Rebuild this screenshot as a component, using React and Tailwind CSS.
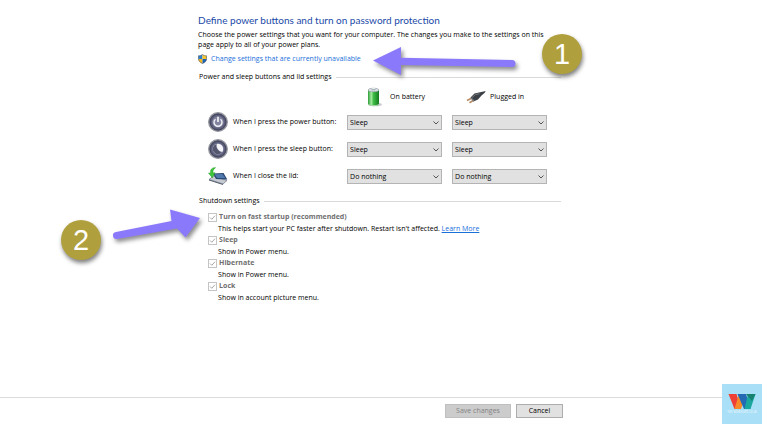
import React, { useState } from 'react';

const options = ['Do nothing', 'Sleep', 'Hibernate', 'Shut down'];

// Icons

const ShieldIcon = () => (
  <svg viewBox="0 0 18 20" className="h-[10px] w-[9px] shrink-0">
    <path d="M9 1C6.500 3 4 3.500 1 3.500V10H9Z" fill="#2d7fd0" />
    <path d="M9 1C11.500 3 14 3.500 17 3.500V10H9Z" fill="#f8c52c" />
    <path d="M1 10H9V19C4 17 1 14 1 10Z" fill="#f5b81f" />
    <path d="M17 10H9V19C14 17 17 14 17 10Z" fill="#1c62b5" />
    <path d="M9 1C6.500 3 4 3.500 1 3.500V10C1 14 4 17 9 19C14 17 17 14 17 10V3.500C14 3.500 11.500 3 9 1Z" fill="none" stroke="#4a5666" strokeWidth="1.200" />
  </svg>
);

const BatteryIcon = () => (
  <svg viewBox="0 0 16 22" className="h-[22px] w-4 shrink-0">
    <defs>
      <linearGradient id="cell" x1="0" x2="1">
        <stop offset="0" stopColor="#2c9d36" />
        <stop offset="0.3" stopColor="#a5eba0" />
        <stop offset="0.5" stopColor="#3fbd44" />
        <stop offset="1" stopColor="#157a20" />
      </linearGradient>
    </defs>
    <ellipse cx="10" cy="18.500" rx="6" ry="1.800" fill="#c9cdd0" />
    <path d="M2 4V18C2 20.200 13 20.200 13 18V4Z" fill="url(#cell)" />
    <ellipse cx="7.500" cy="4" rx="5.500" ry="1.800" fill="#d8dfe3" stroke="#8d979d" strokeWidth="0.600" />
    <path d="M5.500 2V3.800C5.500 4.500 9.500 4.500 9.500 3.800V2Z" fill="#a7b2b8" />
    <ellipse cx="7.500" cy="2" rx="2" ry="0.900" fill="#eef2f4" />
    <path d="M2 17.500C2 19.600 13 19.600 13 17.500V18.500C13 20.700 2 20.700 2 18.500Z" fill="#a5cfa6" />
  </svg>
);

const PlugIcon = () => (
  <svg viewBox="0 0 20 14" className="h-[14px] w-5 shrink-0">
    <path d="M1 10.500L6 8M3.500 12.800L8 10" stroke="#b78d69" strokeWidth="1.800" />
    <path d="M4.500 7.500L8.500 3.500L13 2.500L19.700 1L18.500 3L15.500 5.500L12 9.500L7.500 11.500Z" fill="#3c4047" />
    <path d="M6 7.500L9.500 4.500L13.500 3.800" stroke="#7b8087" strokeWidth="0.900" fill="none" />
    <path d="M5 7.800L8 11" stroke="#777b83" strokeWidth="1.200" />
  </svg>
);

const RoundIcon = ({ children }) => (
  <svg viewBox="0 0 20 20" className="size-5">
    <circle cx="10" cy="10" r="9.300" fill="#474961" stroke="#96979f" strokeWidth="1.300" />
    <circle cx="10" cy="10" r="7.300" fill="#5d5f7c" />
    <circle cx="10" cy="10" r="5.800" fill="#8385a0" />
    {children}
  </svg>
);

const PowerIcon = () => (
  <RoundIcon>
    <path d="M7.500 7.200A4 4 0 1 0 12.500 7.200" fill="none" stroke="#f1f1f7" strokeWidth="1.400" />
    <path d="M10 4.800V10" stroke="#fff" strokeWidth="1.500" />
  </RoundIcon>
);

const SleepIcon = () => (
  <RoundIcon>
    <circle cx="10" cy="10" r="5.200" fill="#d9dae6" />
    <path d="M8.500 5A5.200 5.200 0 1 0 14.200 13A6.800 6.800 0 0 1 8.500 5Z" fill="#55576f" />
    <path d="M9 5A5.200 5.200 0 0 1 14.300 12.800A6.800 6.800 0 0 1 9 5Z" fill="#f4f4f9" />
  </RoundIcon>
);

const LidIcon = () => (
  <svg viewBox="0 0 20 18" className="h-[18px] w-5">
    <path d="M1 12.500L5.500 9L19 13.500L15 17Z" fill="#c5cad2" stroke="#6a7280" strokeWidth="0.700" />
    <path d="M1 12.500L15 17V18L1 13.500Z" fill="#565f6e" />
    <path d="M5 6.500L15.500 6L19.300 12.500L8 12Z" fill="#27446d" />
    <path d="M6.500 7.300L14.500 7L17.500 11.300L9 11Z" fill="#5079ad" />
    <path d="M7.500 0.700C3.500 0.500 2 3 2.700 6.300L0.500 6L4.300 10.700L7 5.700L5 6C4.700 3.500 5.300 2.300 7.500 0.700Z" fill="#3fc83a" stroke="#1c9421" strokeWidth="0.500" />
  </svg>
);

const SiteLogo = () => (
  <svg viewBox="0 0 40 40" className="absolute right-0 bottom-0 size-10">
    <rect width="40" height="40" fill="#a9dff7" />
    <path d="M6.500 10H14.500L19 25H12.500Z" fill="#ee4035" />
    <path d="M12.500 25L17 10H24L19 25Z" fill="#f68b28" />
    <path d="M15.500 10H24L28.500 25H22Z" fill="#2469b3" />
    <path d="M22.500 25L26 10H33.500L28.500 25Z" fill="#1aa7a0" />
    <path d="M24 10H33.500L30 17Z" fill="#16826f" />
    <text x="20" y="29" textAnchor="middle" fontSize="3" fill="#fff" opacity="0.800">THE WINDOWS CLUB</text>
  </svg>
);

const SectionTitle = ({ children }) => (
  <div className="flex h-[10px] items-center gap-1">
    <h2 className="pl-px">{children}</h2>
    <div className="h-px flex-1 bg-[#d9d9d9]" />
  </div>
);

const Dropdown = ({ label, value, onChange }) => (
  <div className="relative w-[95px]">
    <select
      aria-label={label}
      value={value}
      onChange={(e) => onChange(e.target.value)}
      className="block h-[15px] w-full appearance-none border border-[#b4b4b4] bg-[#e1e1e1] pl-0.5 leading-[13px] text-black"
    >
      {options.map((o) => <option key={o}>{o}</option>)}
    </select>
    <svg viewBox="0 0 6 4" className="pointer-events-none absolute top-[6px] right-[3px] h-1 w-1.5">
      <path d="M0.500 0.500L3 3L5.500 0.500" fill="none" stroke="#444" strokeWidth="0.900" />
    </svg>
  </div>
);

const ButtonRow = ({ icon, label, initial }) => {
  const [battery, setBattery] = useState(initial);
  const [plugged, setPlugged] = useState(initial);

  return (
    <div className="flex items-center">
      <div className="flex h-5 w-[25px] items-center">{icon}</div>
      <span className="w-[114px] whitespace-nowrap">{label}</span>
      <div className="flex gap-[10px]">
        <Dropdown label={`${label} On battery`} value={battery} onChange={setBattery} />
        <Dropdown label={`${label} Plugged in`} value={plugged} onChange={setPlugged} />
      </div>
    </div>
  );
};

const Setting = ({ id, title, children }) => (
  <div>
    <div className="flex h-3 items-center gap-0.5">
      <span className="relative size-[9px]">
        <input id={id} type="checkbox" defaultChecked disabled className="block size-[9px] appearance-none border border-[#c4c4c4] bg-white" />
        <svg viewBox="0 0 9 9" className="pointer-events-none absolute inset-0 size-[9px]">
          <path d="M2 4.500L3.800 6.300L7 2.700" fill="none" stroke="#a8a8a8" strokeWidth="1" />
        </svg>
      </span>
      <label htmlFor={id} className="font-bold text-[#6f6f6f]">{title}</label>
    </div>
    <p className="h-[11px] pl-[10px] leading-[11px]">{children}</p>
  </div>
);

const Annotations = () => (
  <div className="pointer-events-none absolute inset-0">
    <svg viewBox="0 0 762 424" className="absolute top-0 left-0 h-[424px] w-[762px]">
      <g fill="#8b79fb" className="drop-shadow-[2px_3px_2px_rgba(0,0,0,0.45)]">
        <path d="M373 60.500L401 47V57.700L512 60A3.400 3.400 0 0 1 512 67L401 65V75Z" />
        <path d="M116 232L171.500 221L170 209.500L200 218L185.500 237.500L177 228.500L117 239A3.500 3.500 0 0 1 116 232Z" />
      </g>
    </svg>
    <div className="absolute top-[34px] left-[542px] flex size-10 items-center justify-center rounded-full bg-[#b0a03d] font-['Liberation_Sans',sans-serif] text-[29px] text-white shadow-[1px_3px_4px_rgba(0,0,0,0.5)]">1</div>
    <div className="absolute top-[220px] left-[61px] flex size-10 items-center justify-center rounded-full bg-[#b0a03d] font-['Liberation_Sans',sans-serif] text-[29px] text-white shadow-[1px_3px_4px_rgba(0,0,0,0.5)]">2</div>
  </div>
);

const PowerOptions = () => {
  return (
    <div className="relative flex min-h-screen flex-col overflow-hidden bg-white font-['Open_Sans','Noto_Sans',sans-serif] text-[7px] leading-[10px] text-black">
      <main className="ml-[26%] max-w-[363px] pt-3">
        <h1 className="font-['Lato',sans-serif] text-[10px] leading-4 text-[#1a4aa8]">Define power buttons and turn on password protection</h1>
        <p className="mt-0.5">
          Choose the power settings that you want for your computer. The changes you make to the settings on this page apply to all of your power plans.
        </p>
        <a href="#" className="mt-1 flex h-[10px] items-center gap-1 text-[#1a6fdb]">
          <ShieldIcon />
          Change settings that are currently unavailable
        </a>

        <div className="mt-2">
          <SectionTitle>Power and sleep buttons and lid settings</SectionTitle>
        </div>
        <div className="mt-1 flex h-[22px] items-center pl-[168px]">
          <div className="flex w-[100px] items-center gap-2"><BatteryIcon />On battery</div>
          <div className="flex items-center gap-1"><PlugIcon />Plugged in</div>
        </div>
        <div className="mt-1 flex flex-col gap-[7px] pl-[10px]">
          <ButtonRow icon={<PowerIcon />} label="When I press the power button:" initial="Sleep" />
          <ButtonRow icon={<SleepIcon />} label="When I press the sleep button:" initial="Sleep" />
          <ButtonRow icon={<LidIcon />} label="When I close the lid:" initial="Do nothing" />
        </div>

        <div className="mt-[10px]">
          <SectionTitle>Shutdown settings</SectionTitle>
        </div>
        <div className="mt-[5px] flex flex-col pl-[10px]">
          <Setting id="fast" title="Turn on fast startup (recommended)">
            This helps start your PC faster after shutdown. Restart isn't affected. <a href="#" className="text-[#1a6fdb] underline">Learn More</a>
          </Setting>
          <Setting id="sleep" title="Sleep">Show in Power menu.</Setting>
          <Setting id="hibernate" title="Hibernate">Show in Power menu.</Setting>
          <Setting id="lock" title="Lock">Show in account picture menu.</Setting>
        </div>
      </main>

      <footer className="mt-auto flex h-[27px] items-start gap-[5px] border-t border-[#dcdcdc] pt-[6px] pl-[445px]">
        <button disabled className="h-[14px] w-[66px] border border-[#bfbfbf] bg-[#cccccc] text-[#838383]">Save changes</button>
        <button className="h-[14px] w-[47px] border border-[#adadad] bg-[#e1e1e1] text-black">Cancel</button>
      </footer>

      <SiteLogo />
      <Annotations />
    </div>
  );
};

export default PowerOptions;
